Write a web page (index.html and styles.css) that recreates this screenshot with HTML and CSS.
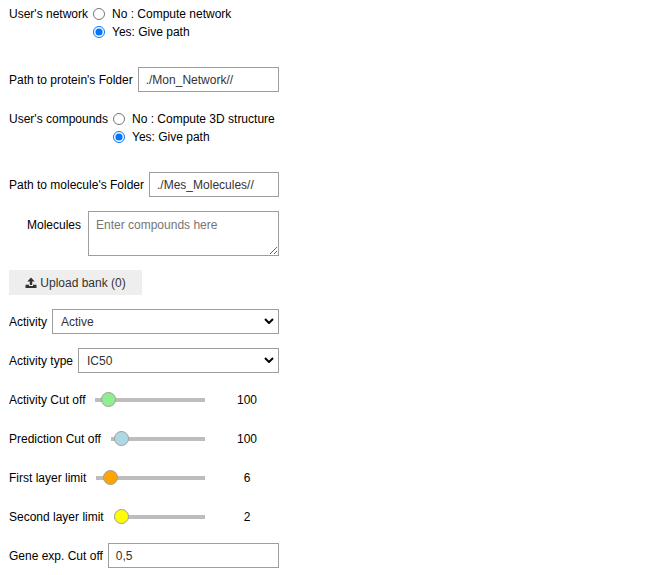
FILE: index.html
```html
<!DOCTYPE html>
<html lang="en">
<head>
<meta charset="utf-8">
<title>Network settings</title>
<link rel="stylesheet" href="styles.css">
</head>
<body>
<form class="settings">
  <div class="row row-radio" role="radiogroup" aria-labelledby="network-label">
    <span class="label" id="network-label">User's network</span>
    <div class="options">
      <label class="option"><input type="radio" name="network">No : Compute network</label>
      <label class="option"><input type="radio" name="network" checked>Yes: Give path</label>
    </div>
  </div>
  <div class="row">
    <label class="label" for="protein-path">Path to protein's Folder</label>
    <input class="field" id="protein-path" type="text" value="./Mon_Network//">
  </div>
  <div class="row row-radio" role="radiogroup" aria-labelledby="compounds-label">
    <span class="label" id="compounds-label">User's compounds</span>
    <div class="options">
      <label class="option"><input type="radio" name="compounds">No : Compute 3D structure</label>
      <label class="option"><input type="radio" name="compounds" checked>Yes: Give path</label>
    </div>
  </div>
  <div class="row">
    <label class="label" for="molecule-path">Path to molecule's Folder</label>
    <input class="field" id="molecule-path" type="text" value="./Mes_Molecules//">
  </div>
  <div class="row row-area">
    <label class="label label-right" for="molecules">Molecules</label>
    <textarea class="field" id="molecules" placeholder="Enter compounds here"></textarea>
  </div>
  <button class="upload" type="button">
    <svg class="upload-icon" viewBox="0 0 12 12" aria-hidden="true"><path d="M6 0.5 9.7 4.5H7.2V8H4.8V4.5H2.3ZM0.5 7.8H4V9H8V7.8H11.5V11H0.5Z"/></svg>
    Upload bank (0)
  </button>
  <div class="row">
    <label class="label" for="activity">Activity</label>
    <div class="select">
      <select class="field" id="activity"><option>Active</option></select>
      <svg class="arrow" viewBox="0 0 10 6" aria-hidden="true"><path d="M1 1 5 5 9 1"/></svg>
    </div>
  </div>
  <div class="row">
    <label class="label" for="activity-type">Activity type</label>
    <div class="select">
      <select class="field" id="activity-type"><option>IC50</option></select>
      <svg class="arrow" viewBox="0 0 10 6" aria-hidden="true"><path d="M1 1 5 5 9 1"/></svg>
    </div>
  </div>
  <div class="row row-slider">
    <label class="label" for="activity-cut">Activity Cut off</label>
    <input class="slider green" id="activity-cut" type="range" min="0" max="1700" value="100">
    <output class="value" for="activity-cut">100</output>
  </div>
  <div class="row row-slider">
    <label class="label" for="prediction-cut">Prediction Cut off</label>
    <input class="slider blue" id="prediction-cut" type="range" min="0" max="2200" value="100">
    <output class="value" for="prediction-cut">100</output>
  </div>
  <div class="row row-slider">
    <label class="label" for="first-layer">First layer limit</label>
    <input class="slider orange" id="first-layer" type="range" min="2" max="56" value="6">
    <output class="value" for="first-layer">6</output>
  </div>
  <div class="row row-slider">
    <label class="label" for="second-layer">Second layer limit</label>
    <input class="slider yellow" id="second-layer" type="range" min="2" max="56" value="2">
    <output class="value" for="second-layer">2</output>
  </div>
  <div class="row">
    <label class="label" for="gene-cut">Gene exp. Cut off</label>
    <input class="field" id="gene-cut" type="text" value="0,5">
  </div>
</form>
</body>
</html>
```
FILE: styles.css
```css
* {
  box-sizing: border-box;
}

body {
  margin: 0;
  background: #fff;
  color: #000;
  font: 12px/18px "Liberation Sans", Arial, sans-serif;
}

.settings {
  display: flex;
  flex-direction: column;
  gap: 14px;
  max-width: 288px;
  padding: 1px 9px 7px;
}

.row {
  display: flex;
  align-items: center;
  gap: 5px;
  min-height: 25px;
}

.row-radio {
  align-items: flex-start;
  padding: 4px 0 12px;
}

.row-area {
  align-items: flex-start;
  gap: 7px;
}

.label {
  flex: none;
}

.label-right {
  width: 72px;
  padding-top: 5px;
  text-align: right;
}

.option {
  display: flex;
  align-items: center;
  gap: 7px;
}

.option input {
  width: 12px;
  height: 12px;
  margin: 0;
}

.field {
  flex: 1;
  min-width: 0;
  height: 25px;
  margin: 0;
  padding: 0 7px;
  border: 1px solid #9e9e9e;
  border-radius: 0;
  background-color: #fff;
  color: #333;
  font: inherit;
}

.select {
  display: flex;
  flex: 1;
  position: relative;
}

select.field {
  padding: 0 20px 0 8px;
  appearance: none;
}

.arrow {
  position: absolute;
  top: 9px;
  right: 5px;
  width: 10px;
  height: 6px;
  fill: none;
  stroke: #000;
  stroke-width: 2;
  pointer-events: none;
}

textarea.field {
  height: 45px;
  padding: 4px 7px;
  resize: vertical;
}

.field::placeholder {
  color: #757575;
}

.upload {
  display: flex;
  align-items: center;
  justify-content: center;
  gap: 3px;
  width: 133px;
  height: 25px;
  padding: 0;
  border: 0;
  background: #eee;
  color: #333;
  font: inherit;
}

.upload-icon {
  width: 12px;
  height: 12px;
  fill: currentColor;
}

.row-slider {
  gap: 10px;
}

.slider {
  flex: 1;
  min-width: 0;
  height: 16px;
  margin: 0;
  appearance: none;
  background: transparent;
}

.slider::-webkit-slider-runnable-track {
  height: 4px;
  background: #bdbdbd;
}

.slider::-webkit-slider-thumb {
  width: 15px;
  height: 15px;
  margin-top: -6px;
  appearance: none;
  border: 1px solid #9e9e9e;
  border-radius: 50%;
  background: var(--thumb);
}

.green {
  --thumb: lightgreen;
}

.blue {
  --thumb: lightblue;
}

.orange {
  --thumb: orange;
}

.yellow {
  --thumb: yellow;
}

.value {
  width: 64px;
  text-align: center;
}
```
